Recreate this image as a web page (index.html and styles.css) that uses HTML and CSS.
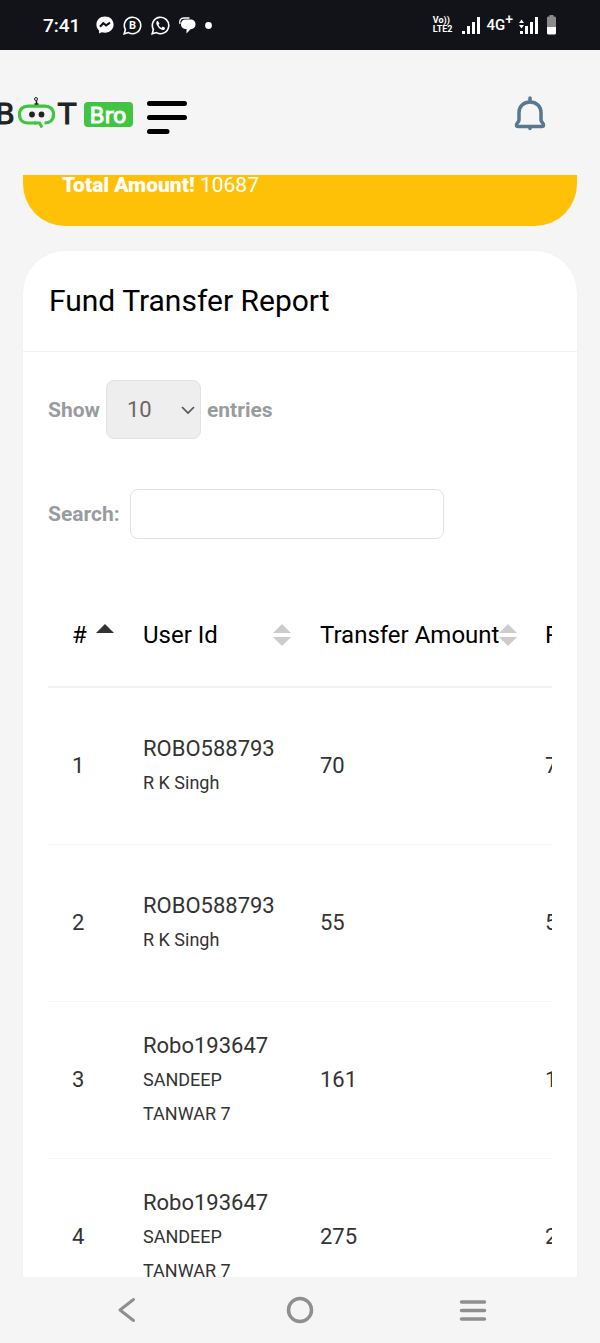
FILE: index.html
```html
<!DOCTYPE html>
<html lang="en">
<head>
    <meta charset="UTF-8">
    <meta name="viewport" content="width=device-width, initial-scale=1.0">
    <title>Fund Transfer Report</title>
    <link rel="stylesheet" href="styles.css">
</head>
<body>
    <div class="status-bar">
        <span class="time">7:41</span>
        <div class="status-icons">
            <svg width="18" height="18" viewBox="0 0 18 18">
                <path d="M9 0.5C4 .5.4 4 .4 8.6c0 2.5 1 4.6 2.7 6.1v2.8l2.6-1.3c1 .3 2.1.5 3.3.5 5 0 8.6-3.5 8.6-8.1S14 .5 9 .5z" fill="#fff"/>
                <path d="M4 10.8l3.3-3.6 2.8 2.2L14 6.6" fill="none" stroke="#121318" stroke-width="2"/>
            </svg>
            <svg width="19" height="19" viewBox="0 0 19 19">
                <path d="M1.2 17.8l1.2-4.3a8.2 8.2 0 1 1 3.1 3.1z" fill="none" stroke="#fff" stroke-width="1.6"/>
                <text x="9.6" y="13.4" class="badge-letter">B</text>
            </svg>
            <svg width="19" height="19" viewBox="0 0 19 19">
                <path d="M1.2 17.8l1.2-4.3a8.2 8.2 0 1 1 3.1 3.1z" fill="none" stroke="#fff" stroke-width="1.6"/>
                <path d="M6.6 4.8c-1.5.8-1.7 2.4-.8 4.1 1.2 2.3 2.8 3.9 5 4.8 1.7.6 3-.1 3.4-1.8l-2.5-1.3-1.2 1.3c-1.4-.7-2.4-1.7-3-3l1-1.3z" fill="#fff"/>
            </svg>
            <svg width="17" height="17" viewBox="0 0 17 17">
                <path d="M1 7C.2 3.500 1.500 1 5 1h5.500" fill="none" stroke="#fff" stroke-width="1.300"/>
                <path d="M6.500 2.500h5c3 0 5 2 5 4.700s-2 4.800-4.700 4.800L7.500 16.500V12C4 12 2 10 2 7.200s1.800-4.700 4.500-4.700z" fill="#fff"/>
            </svg>
            <svg width="7" height="7" viewBox="0 0 7 7"><circle cx="3.500" cy="3.500" r="3.400" fill="#fff"/></svg>
        </div>
        <div class="status-right">
            <span class="volte">Vo))<br>LTE2</span>
            <svg width="18" height="17" viewBox="0 0 18 17" fill="#fff">
                <rect y="14" width="3" height="3"/><rect x="5" y="9" width="3" height="8"/>
                <rect x="10" y="5" width="3" height="12"/><rect x="15" width="3" height="17"/>
            </svg>
            <span class="network">4G<sup>+</sup></span>
            <svg width="19" height="17" viewBox="0 0 19 17" fill="#fff">
                <path d="M2.500 2.500L5 6H0zM0 8h5L2.500 11.500z"/><rect x="1" y="14" width="3" height="3"/>
                <rect x="6" y="9" width="3" height="8"/><rect x="11" y="5" width="3" height="12"/><rect x="16" width="3" height="17"/>
            </svg>
            <svg class="battery" width="9" height="20" viewBox="0 0 9 20">
                <path d="M2.500 0h4v1.500H8Q9 1.500 9 3v9H0V3Q0 1.500 1 1.500h1.500z" fill="#8b8b8e"/>
                <path d="M0 12h9v6q0 1.500-1.500 1.500h-6Q0 19.500 0 18z" fill="#fff"/>
            </svg>
        </div>
    </div>

    <header class="header">
        <a class="logo" href="#" aria-label="Bot Bro">
            <svg width="134" height="36" viewBox="0 0 134 36">
                <text x="-5" y="28" class="logo-text">B</text>
                <path d="M36 27H28C23 27 19.500 24 19.500 18.500S23 10.200 28 10.200H45C50 10.200 53.500 13 53.500 18.500S50 27 44.500 27" fill="none" stroke="#3fc53f" stroke-width="3.200"/>
                <path d="M34 27H39.500L42 31.500" fill="none" stroke="#3fc53f" stroke-width="3"/>
                <circle cx="32" cy="18.500" r="2.900" fill="#222"/>
                <circle cx="41.500" cy="18.500" r="2.900" fill="#222"/>
                <path d="M34.500 8h4M36.500 8V4.500" stroke="#222" stroke-width="1.500"/>
                <circle cx="36" cy="3" r="1.500" fill="none" stroke="#222"/>
                <text x="67" y="28" class="logo-text" text-anchor="middle">T</text>
                <rect x="84" y="6" width="49" height="25" rx="4" fill="#3fc53f"/>
                <text x="108" y="27" class="logo-bro">Bro</text>
            </svg>
        </a>
        <button class="icon-btn" aria-label="Menu">
            <svg width="42" height="42" viewBox="0 0 42 42" stroke="#000" stroke-width="5" stroke-linecap="round">
                <path d="M3.500 10.500H38.500M3.500 24.500H38.500M3.500 38.500H21"/>
            </svg>
        </button>
        <button class="icon-btn bell" aria-label="Notifications">
            <svg width="32" height="36" viewBox="0 0 32 36" fill="none" stroke="#567890" stroke-width="3.500" stroke-linecap="round" stroke-linejoin="round">
                <path d="M16 2v4M16 6C9.500 6 5 10.500 5 16.500v7.500c0 2-2.500 3.300-2.500 5 0 1 .7 1.500 1.800 1.500h23.400c1.100 0 1.800-.5 1.800-1.500 0-1.700-2.500-3-2.500-5V16.500c0-6-4.500-10.500-11-10.500z"/>
                <path d="M16 31.500v1"/>
            </svg>
        </button>
    </header>

    <main class="content">
        <div class="total"><strong>Total Amount!</strong> 10687</div>

        <section class="card">
            <h4 class="card-title">Fund Transfer Report</h4>
            <div class="card-body">
                <div class="length">
                    <label for="entries">Show</label>
                    <div class="select-wrap">
                        <select id="entries">
                            <option>10</option>
                            <option>25</option>
                            <option>50</option>
                            <option>100</option>
                        </select>
                        <svg class="chevron" width="14" height="9" viewBox="0 0 14 9" fill="none" stroke="#555" stroke-width="1.700"><path d="M1 1l6 6 6-6"/></svg>
                    </div>
                    <label for="entries">entries</label>
                </div>
                <div class="filter">
                    <label for="search">Search:</label>
                    <input type="search" id="search">
                </div>

                <div class="table-wrap">
                    <table>
                        <colgroup>
                            <col class="col-no"><col class="col-user"><col class="col-amount"><col class="col-payable">
                        </colgroup>
                        <thead>
                            <tr>
                                <th><div class="th"># <svg width="18" height="24" viewBox="0 0 18 24"><path d="M9 1l9 9H0z" fill="#333"/></svg></div></th>
                                <th><div class="th">User Id <svg width="18" height="24" viewBox="0 0 18 24" fill="#ccc"><path d="M9 1l9 9H0zM0 14h18l-9 9z"/></svg></div></th>
                                <th><div class="th">Transfer Amount <svg width="18" height="24" viewBox="0 0 18 24" fill="#ccc"><path d="M9 1l9 9H0zM0 14h18l-9 9z"/></svg></div></th>
                                <th>Payable Amount</th>
                            </tr>
                        </thead>
                        <tbody>
                            <tr><td>1</td><td>ROBO588793<br><small>R K Singh</small></td><td>70</td><td>70</td></tr>
                            <tr><td>2</td><td>ROBO588793<br><small>R K Singh</small></td><td>55</td><td>55</td></tr>
                            <tr><td>3</td><td>Robo193647<br><small>SANDEEP<br>TANWAR 7</small></td><td>161</td><td>161</td></tr>
                            <tr><td>4</td><td>Robo193647<br><small>SANDEEP<br>TANWAR 7</small></td><td>275</td><td>275</td></tr>
                        </tbody>
                    </table>
                </div>
            </div>
        </section>
    </main>

    <nav class="bottom-nav">
        <button class="icon-btn" aria-label="Back">
            <svg width="28" height="28" viewBox="0 0 28 28" fill="none" stroke="#8f8f8f" stroke-width="3" stroke-linecap="round" stroke-linejoin="round"><path d="M20.500 3.500L7 14l13.500 10.500"/></svg>
        </button>
        <button class="icon-btn" aria-label="Home">
            <svg width="28" height="28" viewBox="0 0 28 28" fill="none" stroke="#8f8f8f" stroke-width="3.500"><circle cx="14" cy="14" r="11.500"/></svg>
        </button>
        <button class="icon-btn" aria-label="Recent apps">
            <svg width="28" height="28" viewBox="0 0 28 28" stroke="#8f8f8f" stroke-width="3.500" stroke-linecap="round"><path d="M2.500 6h23M2.500 14.500h23M2.500 23h23"/></svg>
        </button>
    </nav>
</body>
</html>
```

FILE: styles.css
```css
* {
    margin: 0;
    padding: 0;
    box-sizing: border-box;
}

body {
    display: flex;
    flex-direction: column;
    height: 100vh;
    background-color: #f5f5f5;
    font-family: Roboto, sans-serif;
    font-size: 22px;
    color: #333;
}

svg {
    display: block;
    flex-shrink: 0;
}

.icon-btn {
    border: none;
    background: none;
    cursor: pointer;
}

/* phone status bar */
.status-bar {
    display: flex;
    align-items: center;
    height: 50px;
    flex-shrink: 0;
    padding: 0 44px 0 43px;
    background-color: #121318;
    color: #fff;
}

.time {
    font-size: 19px;
    font-weight: 500;
}

.status-icons {
    display: flex;
    align-items: center;
    gap: 9px;
    margin-left: 16px;
}

.badge-letter {
    font-size: 11px;
    font-weight: 700;
    text-anchor: middle;
    fill: #fff;
}

.status-right {
    display: flex;
    align-items: center;
    gap: 6px;
    margin-left: auto;
}

.volte {
    margin-right: 4px;
    font-size: 9px;
    line-height: 9px;
    font-weight: 700;
}

.network {
    font-size: 15px;
    line-height: 18px;
    font-weight: 500;
}

.network sup {
    font-size: 14px;
    line-height: 0;
}

.battery {
    margin-left: 3px;
}

.header {
    display: flex;
    align-items: center;
    height: 125px;
    flex-shrink: 0;
    padding: 2px 54px 0 0;
}

.logo {
    margin-right: 12px;
}

.logo-text {
    font-family: "DejaVu Sans", sans-serif;
    font-size: 29px;
    fill: #222;
    stroke: #222;
}

.logo-bro {
    font-family: "DejaVu Sans", sans-serif;
    font-size: 22px;
    text-anchor: middle;
    fill: #fff;
    stroke: #fff;
}

.bell {
    margin-left: auto;
}

.content {
    flex: 1;
    min-height: 0;
    padding: 0 23px;
    overflow: hidden auto;
    scrollbar-width: none;
}

.total {
    margin-bottom: 25px;
    padding: 0 39px 31px;
    border-radius: 0 0 42px 42px;
    background-color: #ffc107;
    color: #fff;
    font-size: 21px;
    line-height: 20px;
}

.total strong {
    font-weight: 900;
}

.card {
    border-radius: 42px;
    background-color: #fff;
    box-shadow: 0 0 3px rgba(0, 0, 0, 0.03);
}

.card-title {
    padding: 30px 26px;
    border-bottom: 1px solid #f2f2f2;
    font-size: 30px;
    line-height: 40px;
    font-weight: 400;
    color: #000;
}

.card-body {
    padding: 28px 25px;
}

.length, .filter {
    display: flex;
    align-items: center;
    font-size: 21px;
    color: #999c9f;
    font-weight: 700;
}

.length {
    gap: 6px;
    margin-bottom: 50px;
}

.select-wrap {
    position: relative;
}

select {
    display: block;
    width: 95px;
    height: 59px;
    padding: 0 20px;
    border: 1px solid #e2e2e2;
    border-radius: 8px;
    background-color: #eee;
    appearance: none;
    font: inherit;
    font-size: 22px;
    font-weight: 400;
    color: #6e6464;
}

.chevron {
    position: absolute;
    right: 6px;
    top: 26px;
    pointer-events: none;
}

.filter {
    gap: 10px;
    margin-bottom: 44px;
}

.filter input {
    width: 314px;
    height: 50px;
    padding: 0 12px;
    border: 1px solid #e2e2e2;
    border-radius: 8px;
    font: inherit;
}

.table-wrap {
    overflow: auto hidden;
    scrollbar-width: none;
}

table {
    width: 720px;
    table-layout: fixed;
    border-collapse: collapse;
}

.col-no {
    width: 71px;
}

.col-user {
    width: 177px;
}

.col-amount {
    width: 225px;
}

th {
    height: 104px;
    padding: 0 0 0 24px;
    border-bottom: 2px solid #f2f2f2;
    font-size: 24px;
    font-weight: 400;
    text-align: left;
    white-space: nowrap;
    color: #000;
}

.th {
    display: flex;
    align-items: center;
    justify-content: space-between;
    padding-right: 5px;
}

td {
    height: 157px;
    padding: 0 0 0 24px;
    border-bottom: 1px solid #f5f5f5;
    line-height: 33px;
}

td small {
    font-size: 18px;
}

.bottom-nav {
    display: grid;
    grid-template-columns: repeat(3, 1fr);
    place-items: center;
    height: 66px;
    flex-shrink: 0;
    padding: 0 40px;
}
```
